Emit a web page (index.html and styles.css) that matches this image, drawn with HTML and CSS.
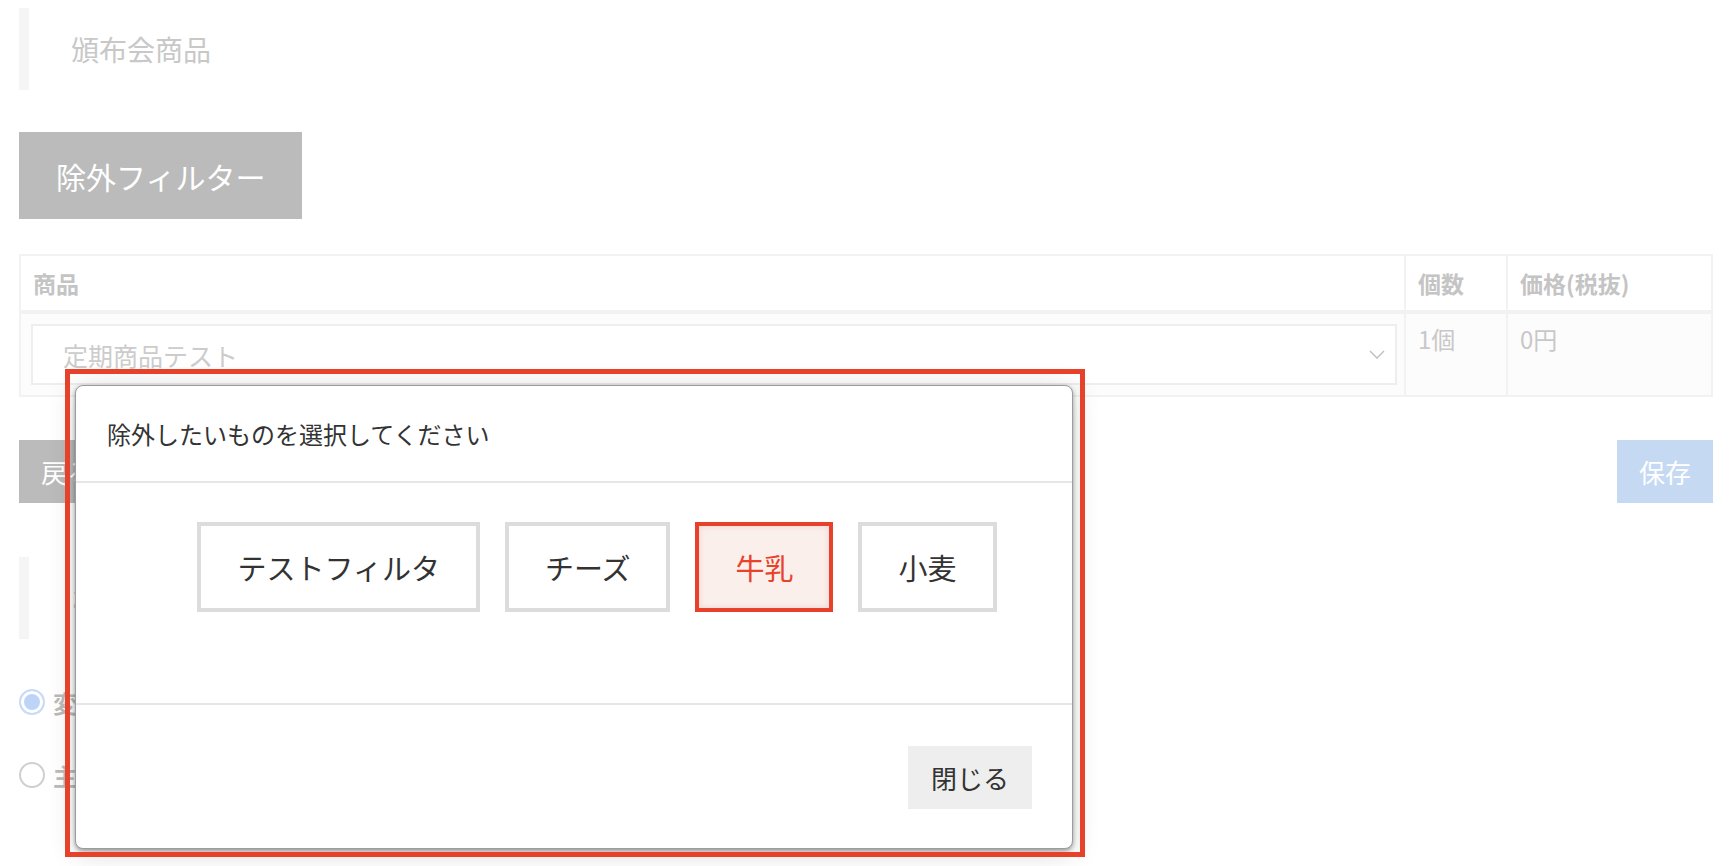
FILE: index.html
```html
<!DOCTYPE html>
<html lang="ja">
<head>
  <meta charset="UTF-8" />
  <meta name="viewport" content="width=device-width, initial-scale=1" />
  <title>頒布会商品</title>
  <link rel="stylesheet" href="styles.css">
</head>
<body>

<div class="page">
  <div class="section-title">頒布会商品</div>

  <button class="filter-btn">除外フィルター</button>

  <table class="items">
    <thead>
    <tr>
      <th>商品</th>
      <th class="col-qty">個数</th>
      <th class="col-price">価格(税抜)</th>
    </tr>
    </thead>
    <tbody>
    <tr>
      <td>
        <div class="select">
          <span>定期商品テスト</span>
          <svg class="chevron" width="16" height="9" viewBox="0 0 16 9"><polyline points="1,1 8,8 15,1" fill="none" stroke="#bcbcbc" stroke-width="1.3"/></svg>
        </div>
      </td>
      <td>1個</td>
      <td>0円</td>
    </tr>
    </tbody>
  </table>

  <div class="actions">
    <button class="back-btn">戻る</button>
    <button class="save-btn">保存</button>
  </div>

  <div class="section-title second">お届け設定</div>

  <div class="radios">
    <label class="radio"><span class="dot checked"></span>変更する</label>
    <label class="radio"><span class="dot"></span>主契約と同じ</label>
  </div>
</div>

<div class="modal">
  <div class="modal-header">除外したいものを選択してください</div>
  <div class="modal-body">
    <button class="chip">テストフィルタ</button>
    <button class="chip">チーズ</button>
    <button class="chip active">牛乳</button>
    <button class="chip">小麦</button>
  </div>
  <div class="modal-footer">
    <button class="close-btn">閉じる</button>
  </div>
</div>

<div class="highlight"></div>

</body>
</html>
```

FILE: styles.css
```css
body {
  margin: 0;
  font-family: "Noto Sans CJK JP", "Noto Sans", sans-serif;
  background: #fff;
  color: #333;
}
button {
  font: inherit;
  border: none;
  cursor: pointer;
}
.page {
  padding: 8px 19px;
}
.section-title {
  display: flex;
  align-items: center;
  height: 82px;
  padding-left: 42px;
  border-left: 10px solid #f5f5f5;
  font-size: 28px;
  color: #c8c8c8;
}
.section-title.second {
  margin-top: 54px;
}
.filter-btn {
  display: block;
  margin-top: 42px;
  height: 87px;
  padding: 0 37px;
  background: #bbb;
  color: #fff;
  font-size: 30px;
}
.items {
  margin-top: 35px;
  width: 100%;
  border-collapse: collapse;
}
.items th, .items td {
  border: 2px solid #f2f2f2;
  text-align: left;
  vertical-align: top;
  padding: 0 12px;
}
.items th {
  border-bottom-width: 4px;
  padding-top: 13px;
  padding-bottom: 13px;
  font-size: 23px;
  line-height: 28px;
  font-weight: 700;
  color: #c4c4c4;
  background: #fff;
}
.items td {
  background: #fcfcfc;
  font-size: 24px;
  line-height: 30px;
  color: #c8c8c8;
  padding-top: 10px;
}
.items td:first-child {
  padding: 10px 7px 10px 10px;
}
.col-qty {
  width: 76px;
}
.col-price {
  width: 179px;
}
.select {
  display: flex;
  align-items: center;
  justify-content: space-between;
  height: 57px;
  padding: 0 10px 0 30px;
  border: 2px solid #eee;
  background: #fff;
  font-size: 25px;
  color: #ccc;
}
.actions {
  display: flex;
  justify-content: space-between;
  margin-top: 43px;
}
.back-btn, .save-btn {
  height: 63px;
  padding: 0 22px;
  color: #fff;
  font-size: 26px;
}
.back-btn {
  background: #bbb;
}
.save-btn {
  background: #c5d9f3;
}
.radios {
  display: flex;
  flex-direction: column;
  gap: 47px;
  margin-top: 50px;
}
.radio {
  display: flex;
  align-items: center;
  gap: 8px;
  height: 26px;
  font-size: 24px;
  font-weight: 700;
  color: #bbb;
}
.dot {
  box-sizing: border-box;
  width: 26px;
  height: 26px;
  border-radius: 50%;
  border: 2px solid #cfcfcf;
  background: #fff;
}
.dot.checked {
  border-color: #c8dbfa;
  background: #bcd4f8;
  box-shadow: inset 0 0 0 3px #fff;
}

/* modal */
.modal {
  position: absolute;
  left: 75px;
  top: 385px;
  width: 996px;
  height: 462px;
  display: flex;
  flex-direction: column;
  background: #fff;
  border: 1px solid #9c9c9c;
  border-radius: 8px;
  box-shadow: 0 2px 4px rgba(0,0,0,0.35), 0 4px 28px rgba(0,0,0,0.16);
}
.modal-header {
  display: flex;
  align-items: center;
  height: 95px;
  padding-left: 31px;
  border-bottom: 2px solid #e6e6e6;
  font-size: 24px;
  color: #333;
}
.modal-body {
  display: flex;
  justify-content: center;
  align-items: flex-start;
  gap: 25px;
  height: 181px;
  padding: 39px 0 0 46px;
  border-bottom: 2px solid #e6e6e6;
}
.chip {
  height: 90px;
  padding: 0 36px;
  border: 4px solid #dcdcdc;
  background: #fff;
  font-size: 29px;
  color: #333;
}
.chip.active {
  border-color: #e8412b;
  background: #fbefec;
  color: #e8432a;
  box-shadow: inset 0 0 6px rgba(200,120,110,0.25);
}
.modal-footer {
  flex: 1;
  display: flex;
  justify-content: flex-end;
  align-items: flex-end;
  padding: 0 40px 39px 0;
}
.close-btn {
  height: 63px;
  padding: 0 23px;
  background: #eee;
  color: #333;
  font-size: 26px;
}
.highlight {
  position: absolute;
  left: 65px;
  top: 369px;
  width: 1010px;
  height: 478px;
  border: 5px solid #e8412b;
}
```
